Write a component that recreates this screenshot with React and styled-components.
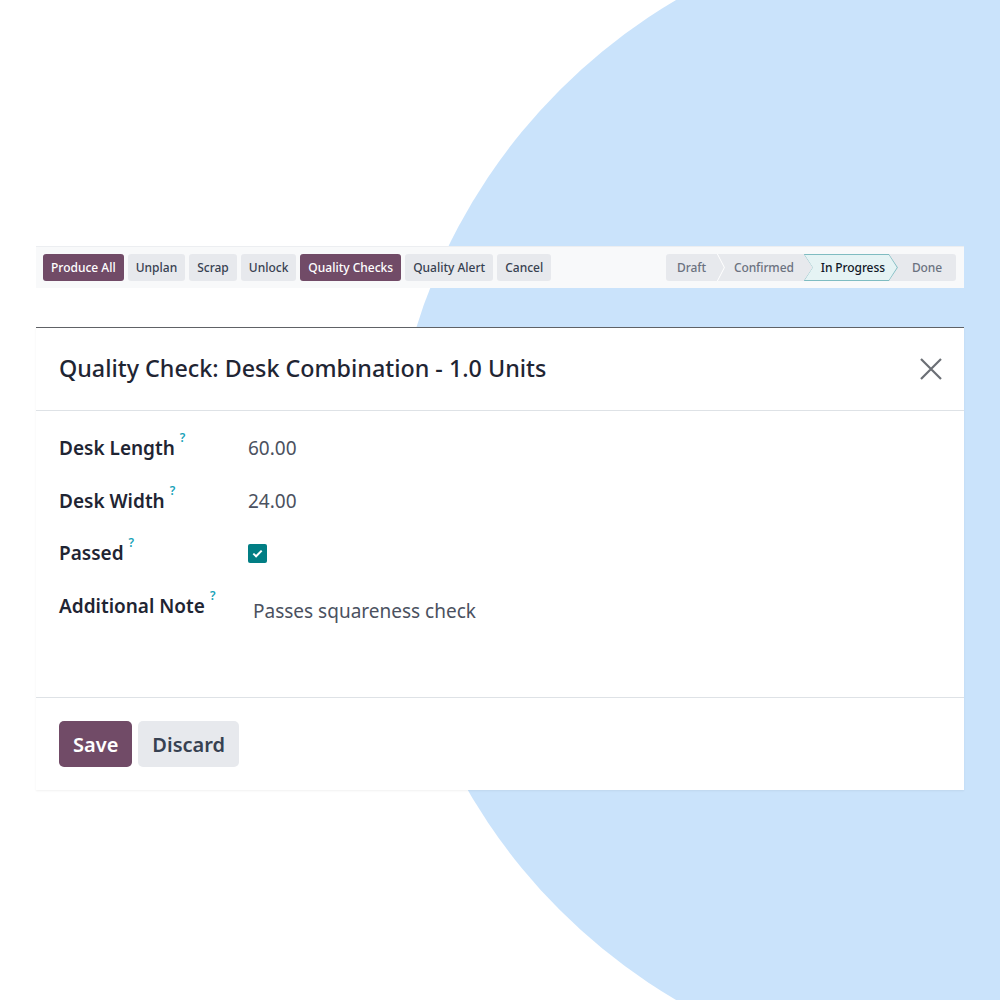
import React from "react";
import styled, { createGlobalStyle } from "styled-components";

const GlobalStyle = createGlobalStyle`
  html, body {
    margin: 0;
    padding: 0;
    background: #ffffff;
  }
  body {
    font-family: "Noto Sans", "Open Sans", sans-serif;
    color: #1f2937;
  }
  * {
    box-sizing: border-box;
  }
`;

const actions = [
	{label: "Produce All", primary: true},
	{label: "Unplan"},
	{label: "Scrap"},
	{label: "Unlock"},
	{label: "Quality Checks", primary: true},
	{label: "Quality Alert"},
	{label: "Cancel"},
];

const fields = [
	{label: "Desk Length", value: "60.00"},
	{label: "Desk Width", value: "24.00"},
	{label: "Passed", check: true},
	{label: "Additional Note", value: "Passes squareness check", note: true},
];

const App = () => {
	return (
		<Page>
			<GlobalStyle />
			<Circle />
			<Content>
				<Toolbar>
					<Actions>
						{actions.map((a) => (
							<ActionButton key={a.label} $primary={a.primary}>
								{a.label}
							</ActionButton>
						))}
					</Actions>
					<Statusbar>
						<Step $pad="0 11px 0 11px">Draft</Step>
						<Sep />
						<Step $pad="0 10px 0 9px">Confirmed</Step>
						<CurrentStep>
							<CurrentInner>In Progress</CurrentInner>
						</CurrentStep>
						<Step $pad="0 14px 0 16px">Done</Step>
					</Statusbar>
				</Toolbar>

				<Dialog>
					<DialogHeader>
						<Title>Quality Check: Desk Combination - 1.0 Units</Title>
						<CloseButton aria-label="Close">
							<svg width="24" height="24" viewBox="0 0 24 24">
								<path d="M2 2 L22 22 M22 2 L2 22" stroke="#6b6f75" strokeWidth="2.2" fill="none" />
							</svg>
						</CloseButton>
					</DialogHeader>

					<DialogBody>
						{fields.map((f) => (
							<FieldRow key={f.label}>
								<Label>
									{f.label}
									<Help>?</Help>
								</Label>
								{f.check ? (
									<Checkbox>
										<svg width="11" height="9" viewBox="0 0 11 9">
											<path d="M1.3 4.6 L4.1 7.3 L9.7 1.6" stroke="#ffffff" strokeWidth="2" fill="none" />
										</svg>
									</Checkbox>
								) : (
									<Value $note={f.note}>{f.value}</Value>
								)}
							</FieldRow>
						))}
					</DialogBody>

					<DialogFooter>
						<FooterButton $primary>Save</FooterButton>
						<FooterButton>Discard</FooterButton>
					</DialogFooter>
				</Dialog>
			</Content>
		</Page>
	);
};

export default App;

const Page = styled.div`
  position: relative;
  width: 1000px;
  height: 1000px;
  overflow: hidden;
  background: #ffffff;
`;

const Circle = styled.div`
  position: absolute;
  left: 390px;
  top: -80px;
  width: 1160px;
  height: 1160px;
  border-radius: 50%;
  background: #cae3fb;
`;

const Content = styled.div`
  position: relative;
  padding: 246px 36px 0 36px;
  display: flex;
  flex-direction: column;
  gap: 39px;
`;

const Toolbar = styled.div`
  height: 42px;
  background: #f8f9fa;
  border-top: 1px solid #eceef1;
  display: flex;
  align-items: center;
  justify-content: space-between;
  padding: 0 8px 0 7px;
`;

const Actions = styled.div`
  display: flex;
  gap: 4px;
`;

const ActionButton = styled.button`
  border: none;
  outline: none;
  height: 27px;
  padding: 0 8px;
  border-radius: 3px;
  font-family: inherit;
  font-size: 12px;
  font-weight: 500;
  background: ${(p) => (p.$primary ? "#714b67" : "#e7e9ed")};
  color: ${(p) => (p.$primary ? "#ffffff" : "#374151")};
  cursor: pointer;
`;

const Statusbar = styled.div`
  display: flex;
  align-items: center;
  height: 27px;
  background: #e7e9ed;
  border-radius: 3px;
  overflow: hidden;
`;

const Step = styled.div`
  height: 27px;
  display: flex;
  align-items: center;
  padding: ${(p) => p.$pad};
  font-size: 12px;
  font-weight: 500;
  letter-spacing: -0.1px;
  color: #6b7280;
`;

const Sep = styled.div`
  width: 8px;
  height: 27px;
  background: #ffffff;
  clip-path: polygon(0 0, 1px 0, 100% 50%, 1px 100%, 0 100%, calc(100% - 1px) 50%);
`;

const CurrentStep = styled.div`
  height: 27px;
  background: #7fbcc1;
  clip-path: polygon(0 0, calc(100% - 9px) 0, 100% 50%, calc(100% - 9px) 100%, 0 100%, 9px 50%);
  padding: 1px;
  margin-right: -2px;
`;

const CurrentInner = styled.div`
  height: 25px;
  display: flex;
  align-items: center;
  padding: 0 12px 0 16px;
  background: #e5f3f4;
  clip-path: polygon(0 0, calc(100% - 8px) 0, 100% 50%, calc(100% - 8px) 100%, 0 100%, 8px 50%);
  font-size: 12px;
  font-weight: 500;
  letter-spacing: -0.1px;
  color: #111827;
`;

const Dialog = styled.div`
  background: #ffffff;
  border-top: 1px solid #5f6266;
  box-shadow: 0 1px 2px rgba(0, 0, 0, 0.06);
  height: 463px;
  display: flex;
  flex-direction: column;
`;

const DialogHeader = styled.div`
  height: 83px;
  border-bottom: 1px solid #dee2e6;
  display: flex;
  align-items: center;
  justify-content: space-between;
  padding: 0 21px 0 23px;
`;

const Title = styled.h4`
  margin: 0;
  font-size: 23.3px;
  font-weight: 500;
  color: #1f2533;
  position: relative;
  top: -1px;
`;

const CloseButton = styled.button`
  border: none;
  background: transparent;
  padding: 0;
  width: 24px;
  height: 24px;
  display: flex;
  cursor: pointer;
`;

const DialogBody = styled.div`
  flex: 1;
  padding: 11px 23px 0 23px;
  display: flex;
  flex-direction: column;
`;

const FieldRow = styled.div`
  display: grid;
  grid-template-columns: 189px 1fr;
  align-items: center;
  height: 52.6px;
`;

const Label = styled.div`
  font-size: 19px;
  font-weight: 600;
  color: #1f2533;
  display: flex;
  align-items: flex-start;
`;

const Help = styled.sup`
  font-size: 12px;
  font-weight: 600;
  color: #17a2b8;
  margin-left: 5px;
  position: relative;
  top: -3px;
  vertical-align: top;
  line-height: 1;
`;

const Value = styled.div`
  font-size: 19px;
  color: #4b5160;
  padding-left: ${(p) => (p.$note ? "5px" : "0")};
  position: relative;
  top: ${(p) => (p.$note ? "5px" : "0")};
`;

const Checkbox = styled.div`
  width: 19px;
  height: 19px;
  background: #017e84;
  border-radius: 2px;
  display: flex;
  align-items: center;
  justify-content: center;
`;

const DialogFooter = styled.div`
  height: 93px;
  border-top: 1px solid #dee2e6;
  display: flex;
  align-items: center;
  gap: 6px;
  padding: 0 23px;
`;

const FooterButton = styled.button`
  border: none;
  outline: none;
  height: 46px;
  padding: 0 14px;
  border-radius: 5px;
  font-family: inherit;
  font-size: 20px;
  font-weight: 600;
  background: ${(p) => (p.$primary ? "#714b67" : "#e7e9ed")};
  color: ${(p) => (p.$primary ? "#ffffff" : "#374151")};
  cursor: pointer;
`;
